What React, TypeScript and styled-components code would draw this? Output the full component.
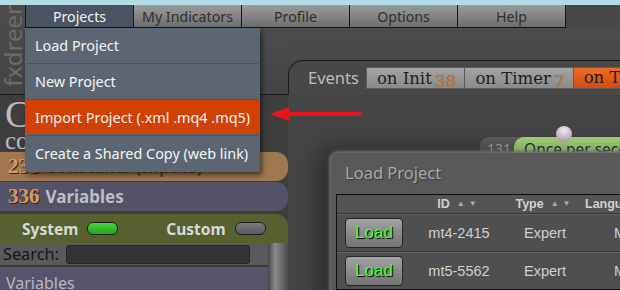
import React from 'react';
import styled, { createGlobalStyle } from 'styled-components';

const GlobalStyle = createGlobalStyle`
  html, body {
    margin: 0;
    padding: 0;
    background: #474747;
  }
  body {
    font-family: "Noto Sans", "Open Sans", sans-serif;
  }
`;

const Page = styled.div`
  position: relative;
  width: 620px;
  height: 290px;
  overflow: hidden;
  background: #474747;
  display: flex;
  flex-direction: column;
`;

const TopStrip = styled.div`
  flex: none;
  height: 5px;
  background: #b1dee4;
`;

const Shell = styled.div`
  flex: 1;
  min-height: 0;
  display: grid;
  grid-template-columns: 25px 263px 1fr;
  grid-template-rows: 23px 67px 1fr;
`;

const Gutter = styled.div`
  grid-column: 1;
  grid-row: 1 / 3;
  background: linear-gradient(#4d4d4d, #444);
  border-bottom: 1px solid #1d1d1d;
  display: flex;
  align-items: flex-end;
  justify-content: center;
  overflow: hidden;
  padding-bottom: 7px;
  box-sizing: border-box;
`;

const GutterLogo = styled.span`
  writing-mode: vertical-rl;
  transform: rotate(180deg);
  font-size: 24px;
  line-height: 24px;
  color: #6b6b6b;
  white-space: nowrap;
`;

/* ---------- menu bar ---------- */

const MenuBar = styled.nav`
  grid-column: 2 / 4;
  grid-row: 1;
  position: relative;
  display: flex;
  z-index: 5;
`;

const MenuTab = styled.div<{ $active?: boolean }>`
  width: 109px;
  box-sizing: border-box;
  margin-right: -1px;
  border: 1px solid #151515;
  border-top: none;
  display: flex;
  align-items: center;
  justify-content: center;
  font-size: 14.2px;
  color: ${p => (p.$active ? '#f2f2f2' : '#2e2e2e')};
  background: ${p =>
    p.$active ? '#4b5361' : 'linear-gradient(#9c9c9c, #6d6d6d)'};
`;

const Dropdown = styled.div`
  position: absolute;
  top: 100%;
  left: 0;
  width: 235px;
  background: #5c6673;
  box-shadow: 2px 3px 5px rgba(0, 0, 0, 0.55);
  padding-bottom: 2px;
`;

const DropItem = styled.div<{ $hot?: boolean }>`
  height: 34px;
  display: flex;
  align-items: center;
  padding-left: 10px;
  font-size: 14.4px;
  color: #f4f4f4;
  white-space: nowrap;
  background: ${p => (p.$hot ? '#d24103' : 'transparent')};
  & + & {
    margin-top: 2px;
    box-shadow: 0 -2px 0 -1px #4b535e, 0 -1px 0 0 #6b7582;
  }
`;

const Arrow = styled.svg`
  position: absolute;
  left: 268px;
  top: 104px;
  z-index: 6;
`;

/* ---------- left side ---------- */

const LeftHead = styled.div`
  grid-column: 2;
  grid-row: 2;
  background: linear-gradient(#4d4d4d, #444);
  border-bottom: 1px solid #1d1d1d;
`;

const LeftPanel = styled.aside`
  grid-column: 1 / 3;
  grid-row: 3;
  display: flex;
  flex-direction: column;
  background: #3e3e3e;
  min-height: 0;
`;

const PanelTitle = styled.div`
  height: 57px;
  padding: 2px 0 0 5px;
  box-sizing: border-box;
  font-family: "Liberation Serif", serif;
  color: #bcbcbc;
  white-space: nowrap;
  overflow: hidden;
`;

const TitleBig = styled.div`
  font-size: 38px;
  line-height: 34px;
`;

const TitleSmall = styled.div`
  font-size: 25px;
  line-height: 20px;
`;

const GroupRow = styled.div<{ $bg: string; $ink: string; $gap: number }>`
  height: 29px;
  margin-bottom: ${p => p.$gap}px;
  background: ${p => p.$bg};
  border-radius: 0 12px 12px 0;
  display: flex;
  align-items: center;
  padding-left: 8px;
  gap: 6px;
  font-size: 17px;
  font-weight: 700;
  color: ${p => p.$ink};
  white-space: nowrap;
`;

const Count = styled.span`
  font-family: "Liberation Serif", serif;
  font-size: 21px;
  font-weight: 700;
  color: #d49a6c;
  text-shadow: 1px 1px 0 #3a2414;
`;

const ToggleRow = styled.div`
  height: 29px;
  background: #56612f;
  border-radius: 0 12px 0 0;
  display: flex;
  align-items: center;
  padding-left: 22px;
  font-size: 15.5px;
  font-weight: 700;
  color: #d8d8d8;
`;

const ToggleLabel = styled.span<{ $space: number }>`
  display: flex;
  align-items: center;
  gap: 9px;
  margin-right: ${p => p.$space}px;
`;

const Switch = styled.span<{ $on?: boolean }>`
  width: 29px;
  height: 11px;
  border-radius: 6px;
  border: 1px solid #1e1e1e;
  background: ${p =>
    p.$on ? 'linear-gradient(#49d23c, #27a51e)' : 'linear-gradient(#7a7a7a, #5a5a5a)'};
`;

const SearchBlock = styled.div`
  flex: 1;
  display: flex;
  min-height: 0;
`;

const SearchMain = styled.div`
  flex: 1;
  display: flex;
  flex-direction: column;
`;

const SearchRow = styled.div`
  height: 30px;
  box-sizing: border-box;
  background: #5a5a5a;
  border-bottom: 2px solid #3a3a3a;
  display: flex;
  align-items: center;
  padding-left: 3px;
  gap: 7px;
  font-size: 16.3px;
  color: #161616;
`;

const SearchInput = styled.div`
  width: 182px;
  height: 17px;
  background: #343434;
  border: 1px solid #262626;
  border-radius: 3px;
`;

const ListHead = styled.div`
  flex: 1;
  background: #55546a;
  padding: 5px 0 0 6px;
  font-size: 16px;
  color: #b8b8c0;
  line-height: 22px;
`;

const Scrollbar = styled.div`
  width: 20px;
  background: linear-gradient(90deg, #444, #8c8c8c 35%, #6a6a6a 70%, #4c4c4c);
`;

/* ---------- right side ---------- */

const RightArea = styled.section`
  grid-column: 3;
  grid-row: 2 / 4;
  display: flex;
  flex-direction: column;
  padding-top: 32px;
  background: linear-gradient(#4c4c4c, #474747 40px);
  min-width: 0;
`;

const EventsBar = styled.div`
  height: 35px;
  box-sizing: border-box;
  border-top: 1px solid #1b1b1b;
  border-left: 1px solid #1b1b1b;
  border-top-left-radius: 15px;
  background: #474747;
  display: flex;
  align-items: flex-start;
  padding: 6px 0 0 19px;
  white-space: nowrap;
  overflow: hidden;
`;

const EventsLabel = styled.span`
  font-size: 16.5px;
  line-height: 22px;
  color: #bdbdbd;
  margin-right: 7px;
`;

const EventTab = styled.span<{ $hot?: boolean }>`
  flex: none;
  height: 22px;
  box-sizing: border-box;
  padding: 0 8px 0 10px;
  border: 1px solid #5b5b5b;
  margin-right: -1px;
  font-family: "DejaVu Serif", serif;
  font-size: 16.5px;
  line-height: 20px;
  color: #1e1e1e;
  background: ${p =>
    p.$hot ? 'linear-gradient(#f06a22, #d44c10)' : 'linear-gradient(#a3a3a3, #8a8a8a)'};
`;

const EventCount = styled.span`
  position: relative;
  top: 3px;
  margin-left: 3px;
  font-size: 17px;
  color: #b9743f;
  text-shadow: 0 0 1px rgba(90, 50, 20, 0.4);
`;

const Canvas = styled.div`
  flex: 1;
  position: relative;
  background: #454545;
`;

const Pin = styled.span`
  position: absolute;
  left: 268px;
  top: 31px;
  width: 16px;
  height: 16px;
  border-radius: 50%;
  background: radial-gradient(circle at 50% 30%, #f6eef6, #c4b2c6 70%);
`;

const Node = styled.div`
  position: absolute;
  left: 192px;
  top: 42px;
  display: flex;
  white-space: nowrap;
`;

const NodeId = styled.span`
  height: 26px;
  padding: 0 12px 0 7px;
  margin-right: -9px;
  border-radius: 9px 0 0 0;
  background: linear-gradient(#626262, #555);
  font-size: 14px;
  line-height: 24px;
  color: #a9a9a9;
`;

const NodeTitle = styled.span`
  height: 26px;
  padding: 0 0 0 10px;
  border-radius: 10px 0 0 0;
  background: #a9d97c;
  font-size: 15.5px;
  line-height: 24px;
  color: #333;
`;

const Dialog = styled.div`
  position: absolute;
  left: 43px;
  top: 58px;
  width: 320px;
  height: 150px;
  border-radius: 7px 0 0 0;
  background: #595959;
  box-shadow: 0 0 3px 2px #6e6e6e, -8px 0 22px 6px rgba(0, 0, 0, 0.35);
`;

const DialogTitle = styled.div`
  height: 41px;
  padding-left: 14px;
  box-sizing: border-box;
  font-size: 16.5px;
  line-height: 40px;
  color: #a8a8a8;
  text-shadow: 1px 1px 1px #3a3a3a;
`;

const Table = styled.div`
  margin-left: 5px;
  border: 1px solid #111;
  border-right: none;
  font-family: "Liberation Sans", Arial, sans-serif;
`;

const TableRow = styled.div<{ $head?: boolean }>`
  display: grid;
  grid-template-columns: 76px 92px 80px 1fr;
  align-items: center;
  height: ${p => (p.$head ? 18 : 37)}px;
  background: ${p => (p.$head ? '#545454' : '#4f4f4f')};
  border-top: ${p => (p.$head ? 'none' : '1px solid #3a3a3a')};
  box-shadow: ${p => (p.$head ? 'none' : 'inset 0 1px #5e5e5e')};
  color: #cfcfcf;
  font-size: 14.5px;
`;

const HeadCell = styled.span<{ $left?: boolean }>`
  text-align: ${p => (p.$left ? 'left' : 'center')};
  font-size: 12.5px;
  font-weight: 700;
  color: #d0d0d0;
  white-space: nowrap;
`;

const SortMarks = styled.span`
  font-size: 8px;
  color: #aaa;
  margin-left: 7px;
  vertical-align: 2px;
  letter-spacing: 4px;
`;

const Cell = styled.span<{ $left?: boolean }>`
  text-align: ${p => (p.$left ? 'left' : 'center')};
  padding-left: ${p => (p.$left ? '29px' : '0')};
  white-space: nowrap;
`;

const ButtonCell = styled.span`
  display: flex;
  align-items: center;
  padding-left: 8px;
`;

const LoadButton = styled.button`
  width: 58px;
  height: 30px;
  border: 1px solid #262626;
  border-radius: 4px;
  background: linear-gradient(#a2a2a2, #737373);
  font-family: "Liberation Sans", Arial, sans-serif;
  font-size: 17px;
  color: #3dff3d;
  text-shadow: 1px 1px 1px #000;
  padding: 0;
`;

const menu = ['Projects', 'My Indicators', 'Profile', 'Options', 'Help'];
const dropItems = [
  'Load Project',
  'New Project',
  'Import Project (.xml .mq4 .mq5)',
  'Create a Shared Copy (web link)'
];
const projects = [
  { id: 'mt4-2415', type: 'Expert', lang: 'MQL4' },
  { id: 'mt5-5562', type: 'Expert', lang: 'MQL5' }
];

export default function App() {
  return (
    <Page>
      <GlobalStyle />
      <TopStrip />
      <Shell>
        <Gutter>
          <GutterLogo>fxdreema</GutterLogo>
        </Gutter>

        <MenuBar>
          {menu.map((m, i) => (
            <MenuTab key={m} $active={i === 0}>
              {m}
            </MenuTab>
          ))}
          <Dropdown>
            {dropItems.map((d, i) => (
              <DropItem key={d} $hot={i === 2}>
                {d}
              </DropItem>
            ))}
          </Dropdown>
        </MenuBar>

        <LeftHead />

        <RightArea>
          <EventsBar>
            <EventsLabel>Events</EventsLabel>
            <EventTab>
              on Init<EventCount>38</EventCount>
            </EventTab>
            <EventTab>
              on Timer<EventCount>7</EventCount>
            </EventTab>
            <EventTab $hot>on Tick</EventTab>
          </EventsBar>
          <Canvas>
            <Node>
              <NodeId>131</NodeId>
              <NodeTitle>Once per second</NodeTitle>
            </Node>
            <Pin />
            <Dialog>
              <DialogTitle>Load Project</DialogTitle>
              <Table>
                <TableRow $head>
                  <span />
                  <HeadCell>
                    ID<SortMarks>▲▼</SortMarks>
                  </HeadCell>
                  <HeadCell>
                    Type<SortMarks>▲▼</SortMarks>
                  </HeadCell>
                  <HeadCell $left>
                    Language<SortMarks>▲▼</SortMarks>
                  </HeadCell>
                </TableRow>
                {projects.map(p => (
                  <TableRow key={p.id}>
                    <ButtonCell>
                      <LoadButton>Load</LoadButton>
                    </ButtonCell>
                    <Cell>{p.id}</Cell>
                    <Cell>{p.type}</Cell>
                    <Cell $left>{p.lang}</Cell>
                  </TableRow>
                ))}
              </Table>
            </Dialog>
          </Canvas>
        </RightArea>

        <LeftPanel>
          <PanelTitle>
            <TitleBig>Code</TitleBig>
            <TitleSmall>conditions</TitleSmall>
          </PanelTitle>
          <GroupRow $bg="#9f7852" $ink="#5f4329" $gap={1}>
            <Count>238</Count>Constants (Inputs)
          </GroupRow>
          <GroupRow $bg="#545266" $ink="#bdbdc4" $gap={3}>
            <Count>336</Count>Variables
          </GroupRow>
          <ToggleRow>
            <ToggleLabel $space={48}>
              System <Switch $on />
            </ToggleLabel>
            <ToggleLabel $space={0}>
              Custom <Switch />
            </ToggleLabel>
          </ToggleRow>
          <SearchBlock>
            <SearchMain>
              <SearchRow>
                Search: <SearchInput />
              </SearchRow>
              <ListHead>Variables</ListHead>
            </SearchMain>
            <Scrollbar />
          </SearchBlock>
        </LeftPanel>
      </Shell>

      <Arrow width="96" height="20" viewBox="0 0 96 20">
        <polygon points="2,10 21,3 21,17" fill="#e8141b" />
        <rect x="19" y="8" width="75" height="4" rx="2" fill="#e8141b" />
      </Arrow>
    </Page>
  );
}
